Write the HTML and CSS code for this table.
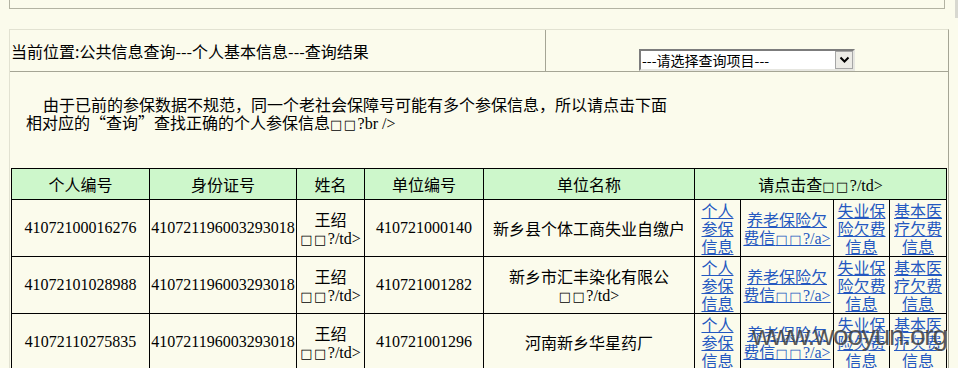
FILE: index.html
```html
<!DOCTYPE html>
<html lang="zh-CN">
<head>
<meta charset="utf-8">
<title>查询结果</title>
<link rel="stylesheet" href="styles.css">
</head>
<body>
<div class="topbar"></div>
<div class="main">
  <div class="head">
    <div class="title">当前位置:公共信息查询---个人基本信息---查询结果</div>
    <div class="pick">
      <div class="select">
        <select class="select-field"><option>---请选择查询项目---</option></select>
        <span class="select-btn"><svg width="11" height="8" viewBox="0 0 11 8"><path d="M1.5 1.5l4 4 4-4" fill="none" stroke="#000" stroke-width="2"/></svg></span>
      </div>
    </div>
  </div>
  <div class="intro">
    <p class="l1">由于已前的参保数据不规范，同一个老社会保障号可能有多个参保信息，所以请点击下面</p>
    <p>相对应的“查询”查找正确的个人参保信息<span class="nd">□□</span><span class="lat">?br /&gt;</span></p>
  </div>
  <table class="res">
    <colgroup>
      <col class="c1"><col class="c2"><col class="c3"><col class="c4"><col class="c5"><col class="c6"><col class="c7"><col class="c8"><col class="c9">
    </colgroup>
    <tr class="hd">
      <th>个人编号</th><th>身份证号</th><th>姓名</th><th>单位编号</th><th>单位名称</th><th colspan="4">请点击查<span class="nd">□□</span><span class="lat">?/td&gt;</span></th>
    </tr>
    <tr>
      <td class="num">41072100016276</td><td class="num">410721196003293018</td>
      <td>王绍<br><span class="nd">□□</span><span class="lat">?/td&gt;</span></td>
      <td class="num">410721000140</td>
      <td>新乡县个体工商失业自缴户</td>
      <td class="lk"><a href="#">个人参保信息</a></td>
      <td class="lk"><a href="#">养老保险欠费信<span class="nd">□□</span><span class="lat">?/a&gt;</span></a></td>
      <td class="lk"><a href="#">失业保险欠费信息</a></td>
      <td class="lk"><a href="#">基本医疗欠费信息</a></td>
    </tr>
    <tr>
      <td class="num">41072101028988</td><td class="num">410721196003293018</td>
      <td>王绍<br><span class="nd">□□</span><span class="lat">?/td&gt;</span></td>
      <td class="num">410721001282</td>
      <td>新乡市汇丰染化有限公<br><span class="nd">□□</span><span class="lat">?/td&gt;</span></td>
      <td class="lk"><a href="#">个人参保信息</a></td>
      <td class="lk"><a href="#">养老保险欠费信<span class="nd">□□</span><span class="lat">?/a&gt;</span></a></td>
      <td class="lk"><a href="#">失业保险欠费信息</a></td>
      <td class="lk"><a href="#">基本医疗欠费信息</a></td>
    </tr>
    <tr>
      <td class="num">41072110275835</td><td class="num">410721196003293018</td>
      <td>王绍<br><span class="nd">□□</span><span class="lat">?/td&gt;</span></td>
      <td class="num">410721001296</td>
      <td>河南新乡华星药厂</td>
      <td class="lk"><a href="#">个人参保信息</a></td>
      <td class="lk"><a href="#">养老保险欠费信<span class="nd">□□</span><span class="lat">?/a&gt;</span></a></td>
      <td class="lk"><a href="#">失业保险欠费信息</a></td>
      <td class="lk"><a href="#">基本医疗欠费信息</a></td>
    </tr>
  </table>
</div>
<div class="scroll-edge"></div>
<div class="wm">www.wooyun.org</div>
</body>
</html>
```
FILE: styles.css
```css
html, body {
  margin: 0;
  padding: 0;
  overflow: hidden;
}
body {
  background: #fbfbec;
  font-family: "Noto Sans CJK SC", sans-serif;
  font-size: 16px;
  color: #000;
  position: relative;
  height: 368px;
}
.topbar {
  box-sizing: border-box;
  margin-left: 9px;
  width: 936px;
  height: 9px;
  border: 1px solid #b3b3a3;
  border-top: 0;
}
.scroll-edge {
  position: absolute;
  left: 955px;
  top: 0;
  width: 3px;
  height: 18px;
  background: #d8d8d0;
}
.main {
  box-sizing: border-box;
  margin: 20px 0 0 9px;
  width: 940px;
  min-height: 400px;
  border-top: 1px solid #e2e2d2;
  border-left: 1px solid #e2e2d2;
  border-right: 1px solid #a5a595;
}
.head {
  box-sizing: border-box;
  display: flex;
  height: 42px;
  border-bottom: 1px solid #a5a595;
}
.title {
  box-sizing: border-box;
  width: 536px;
  padding-left: 1px;
  border-right: 1px solid #a5a595;
  display: flex;
  align-items: center;
  font-size: 16px;
  line-height: 18px;
  white-space: nowrap;
}
.pick {
  flex: 1;
  display: flex;
  justify-content: center;
  align-items: flex-end;
}
.select {
  box-sizing: border-box;
  width: 216px;
  height: 22px;
  display: flex;
  align-items: center;
  background: #fff;
  border-top: 2px solid #7c7c7c;
  border-left: 2px solid #7c7c7c;
  border-bottom: 2px solid #e6e6e0;
  border-right: 2px solid #e6e6e0;
}
.select-field {
  appearance: none;
  -webkit-appearance: none;
  flex: 1;
  min-width: 0;
  height: 18px;
  border: 0;
  padding: 0 0 0 1px;
  margin: 0;
  background: transparent;
  font-family: "Noto Sans CJK SC", sans-serif;
  font-size: 14px;
  line-height: 18px;
  color: #000;
  outline: none;
}
.select-btn {
  box-sizing: border-box;
  width: 18px;
  height: 18px;
  display: flex;
  align-items: center;
  justify-content: center;
  background: #ecebe6;
  border: 1px solid #a6a6a6;
}
.intro {
  padding: 23px 0 0 16px;
  font-size: 16px;
  line-height: 18px;
}
.intro p {
  margin: 0;
}
.intro .l1 {
  text-indent: 17px;
}
.nd {
  font-family: "DejaVu Sans", sans-serif;
  font-size: 13px;
  line-height: 10px;
  letter-spacing: 1.5px;
}
.lat {
  font-family: "Liberation Serif", serif;
  line-height: 14px;
}
.res {
  margin: 37px 0 0 1px;
  border-collapse: collapse;
  table-layout: fixed;
  width: 936px;
  font-size: 16px;
  line-height: 18px;
}
.c1 { width: 138px; }
.c2 { width: 147px; }
.c3 { width: 68px; }
.c4 { width: 119px; }
.c5 { width: 211px; }
.c6 { width: 46px; }
.c7 { width: 93px; }
.c8 { width: 56px; }
.c9 { width: 57px; }
.res th, .res td {
  border: 1px solid #000;
  padding: 1px;
  text-align: center;
  vertical-align: middle;
}
.res th {
  background: #cdf7cb;
  font-weight: normal;
  height: 28px;
}
.res .num {
  font-family: "Liberation Serif", serif;
  white-space: nowrap;
}
.res .lk a {
  color: #2458c0;
  text-decoration: underline;
}
.wm {
  position: absolute;
  left: 752px;
  top: 320px;
  font-family: "Liberation Sans", sans-serif;
  font-size: 28px;
  letter-spacing: -1.2px;
  color: rgba(60, 60, 60, 0.85);
  text-shadow: 1px 1px 0 rgba(255, 255, 255, 0.5);
  white-space: nowrap;
}
```
